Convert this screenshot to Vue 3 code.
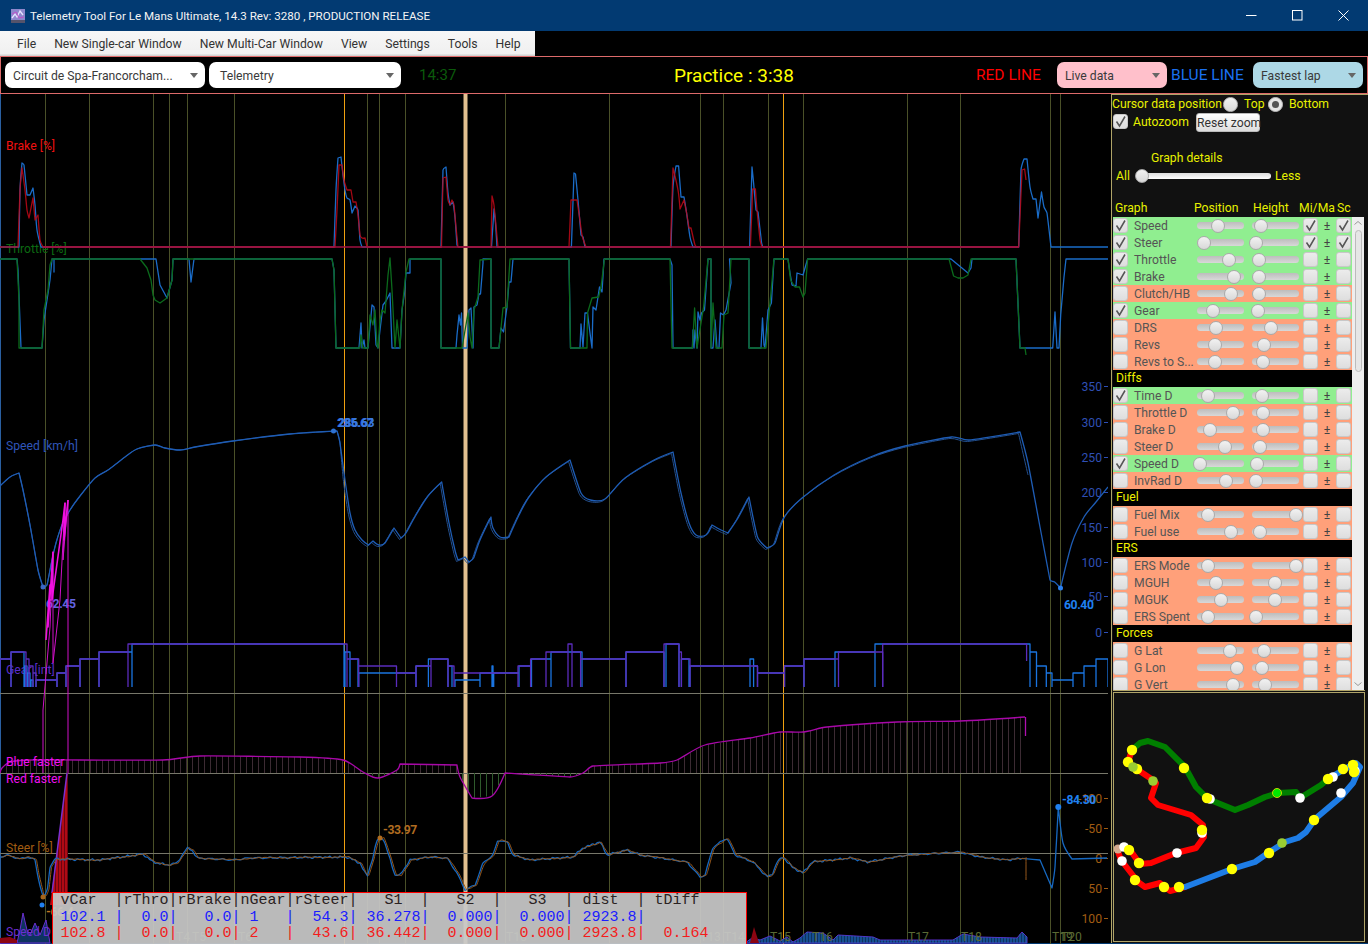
<script setup>
const menus = ['File', 'New Single-car Window', 'New Multi-Car Window', 'View', 'Settings', 'Tools', 'Help']

const graphs = [
  { name: 'Speed', on: true, pos: 1218, h: 1260.7, mm: true, sc: true },
  { name: 'Steer', on: true, pos: 1204, h: 1256, mm: true, sc: true },
  { name: 'Throttle', on: true, pos: 1228.7, h: 1258.7 },
  { name: 'Brake', on: true, pos: 1234, h: 1258.7 },
  { name: 'Clutch/HB', pos: 1230.7, h: 1258.7 },
  { name: 'Gear', on: true, pos: 1212.7, h: 1258 },
  { name: 'DRS', pos: 1216, h: 1271 },
  { name: 'Revs', pos: 1214.7, h: 1263.7 },
  { name: 'Revs to S...', pos: 1214.7, h: 1263 },
  { title: 'Diffs' },
  { name: 'Time D', on: true, pos: 1208, h: 1262 },
  { name: 'Throttle D', pos: 1233, h: 1263 },
  { name: 'Brake D', pos: 1209.7, h: 1263 },
  { name: 'Steer D', pos: 1224.7, h: 1260 },
  { name: 'Speed D', on: true, pos: 1199.7, h: 1257 },
  { name: 'InvRad D', pos: 1226, h: 1255.7 },
  { title: 'Fuel' },
  { name: 'Fuel Mix', pos: 1208, h: 1296.3 },
  { name: 'Fuel use', pos: 1230.7, h: 1260 },
  { title: 'ERS' },
  { name: 'ERS Mode', pos: 1208, h: 1296.3 },
  { name: 'MGUH', pos: 1216, h: 1275 },
  { name: 'MGUK', pos: 1220.7, h: 1275 },
  { name: 'ERS Spent', pos: 1208, h: 1255.7 },
  { title: 'Forces' },
  { name: 'G Lat', pos: 1230, h: 1264 },
  { name: 'G Lon', pos: 1237, h: 1262 },
  { name: 'G Vert', pos: 1233, h: 1264.7 },
]

const turnLines = [45, 89, 153, 169, 187, 234, 367, 379, 405, 505, 609, 700, 723, 768, 803, 907, 960, 1050, 1060]
const grid = [693, 773, 853]

const line = pts => pts.map(p => p.join(',')).join(' ')
const shift = (pts, from, to, dx, dy) => pts.map(([x, y]) => (x > from && x < to ? [x + dx, y + dy] : [x, y]))
const dist = (a, b) => Math.hypot(b[0] - a[0], b[1] - a[1])
const unit = (a, b) => {
  const n = dist(a, b) || 1
  return [(b[0] - a[0]) / n, (b[1] - a[1]) / n]
}

// rounds a trace but leaves real corners (brake onset, speed peaks) sharp
const smooth = pts => {
  const tangent = (prev, p, next, len) => {
    const u = unit(prev, p)
    const v = unit(p, next)
    if (prev === p || next === p || u[0] * v[0] + u[1] * v[1] < 0.5) return [0, 0]
    const t = unit(prev, next)
    return [t[0] * len, t[1] * len]
  }
  let d = `M${pts[0][0]},${pts[0][1]}`
  for (let i = 0; i < pts.length - 1; i++) {
    const p0 = pts[i - 1] || pts[i]
    const p1 = pts[i]
    const p2 = pts[i + 1]
    const p3 = pts[i + 2] || p2
    const seg = dist(p1, p2)
    const h1 = tangent(p0, p1, p2, Math.min(seg, dist(p0, p1) || seg) / 3)
    const h2 = tangent(p1, p2, p3, Math.min(seg, dist(p2, p3) || seg) / 3)
    d += `C${p1[0] + h1[0]},${p1[1] + h1[1]} ${p2[0] - h2[0]},${p2[1] - h2[1]} ${p2[0]},${p2[1]}`
  }
  return d
}

const brakeBlue = [
  [0, 247], [19, 247], [20, 190], [22, 163], [24, 165], [27, 195], [30, 195], [33, 188], [35, 205], [37, 230], [41, 247],
  [334, 247], [336, 190], [338, 158], [341, 157], [343, 175], [345, 190], [347, 198], [350, 200], [352, 213], [355, 206], [358, 210], [360, 240], [362, 247],
  [441, 247], [443, 170], [446, 167], [448, 193], [450, 205], [453, 202], [455, 217], [457, 245], [459, 247],
  [491.5, 247], [494, 209], [495.5, 223], [497, 247],
  [571.4, 247], [574, 173], [575.5, 174], [578, 200], [581, 235], [583, 237], [585, 247],
  [671, 247], [673, 187], [676, 166], [678.6, 166], [681, 197], [684, 197], [686.6, 213], [690, 237], [693, 247],
  [749.6, 247], [752, 167], [753.6, 183], [756, 210], [758, 212], [761.6, 243], [764, 247],
  [1018.7, 247], [1021, 170], [1024, 159], [1027, 159], [1030, 187], [1033, 199], [1036, 199], [1038, 218], [1041.5, 192], [1044, 207], [1047, 213], [1051, 247], [1108, 247],
]
const brakeRed = [
  [0, 247], [18, 247], [20, 190], [22, 168], [25, 190], [27, 210], [29, 218], [31, 208], [33, 198], [35, 220], [38, 215], [40, 240], [43, 247],
  [335, 247], [337, 210], [339, 165], [342, 165], [344, 180], [347, 190], [351, 190], [353, 202], [356, 202], [358, 215], [360, 235], [362, 238], [365, 238], [367, 247],
  [441.5, 247], [443, 178], [446, 177], [448, 200], [450, 205], [452, 200], [454, 205], [456, 227], [458, 247],
  [491, 247], [492, 196], [494, 205], [498, 247],
  [569, 247], [571, 200], [577, 200], [579.5, 217], [582, 235], [586, 247],
  [670.5, 247], [673, 168], [678, 190], [680, 209], [684, 200], [686.6, 213], [689, 228], [691, 228], [695, 245], [698, 247],
  [750.4, 247], [752.7, 189], [755.4, 189], [757, 210], [760, 240], [762, 247],
  [1018.7, 247], [1022, 170], [1024.6, 169], [1026, 180],
]
const brakeFlat = [[43, 247], [1019, 247]]
const throttleBlue = [
  [0, 259], [17, 259], [18, 270], [21, 348], [42, 348], [44, 320], [47, 300], [50, 280], [52, 259], [54, 259], [54, 272], [54, 259],
  [156, 259], [160, 285], [167, 298], [172, 280], [173, 259], [189, 259], [191, 282], [194, 259], [332, 259], [334, 270], [336, 348],
  [359, 348], [361, 323], [362, 348], [364, 340], [365, 348], [368, 348], [372, 305], [374, 307], [376, 345], [378, 348], [380, 330], [383, 305], [386, 301], [390, 293], [392, 348],
  [400, 348], [402, 310], [404.5, 293], [406, 273], [410, 273], [410, 259], [441, 259], [441, 348], [456, 348], [457, 335], [459, 315], [460.5, 325], [461.5, 313], [462.5, 348], [467, 348],
  [469, 310], [471, 308], [473, 348], [474, 307], [477, 305], [479, 294], [480.5, 294], [483, 263], [483, 259], [491, 259], [491, 348], [499, 348], [501, 328], [503.5, 332], [507, 307], [509, 282], [511, 282], [513, 259],
  [569, 259], [570.5, 348], [580, 348], [581, 324], [583, 347], [585, 313], [587.5, 313], [590, 333], [592, 348], [593, 307], [596, 310], [599.5, 287], [602, 292], [604, 259],
  [670, 259], [672, 265], [673, 348], [692.4, 348], [693, 330], [694, 348], [695, 330], [697, 348], [698, 312], [700, 320], [701.5, 313], [704.5, 310], [708, 259], [711, 259], [711, 348], [713, 348], [715, 320], [717, 348], [719, 348], [720.5, 313], [723.5, 315], [726, 310], [731, 283], [729.5, 259],
  [749, 259], [749, 348], [761, 348], [762.5, 318], [764, 345], [765, 348], [768, 310], [771.4, 303], [774, 259], [788, 259], [790, 273], [792, 285], [796, 286], [797, 273], [803, 275], [807.6, 259],
  [951, 259], [968, 273], [971, 268], [972, 259], [1016, 259], [1020, 348], [1052.7, 348], [1055, 312], [1057, 348], [1059, 348], [1060.7, 315], [1064, 277], [1066, 259], [1108, 259],
]
const throttleGreen = [
  [0, 259], [17, 259], [19, 300], [19, 348], [42, 348], [44, 310], [48, 290], [50, 265], [52, 259], [140, 259], [147, 268], [151, 280], [153, 295], [155, 300], [160, 303], [167, 298], [172, 280], [173, 259],
  [332, 259], [334, 270], [336, 348], [360, 348], [361, 335], [363, 348], [368, 348], [370, 315], [373, 325], [375, 310], [377, 345], [378, 348], [380, 320], [382, 310], [385, 313], [388, 275], [390, 258], [392, 290], [395, 348], [397, 320], [400, 348],
  [402, 310], [406, 272], [409, 259], [441, 259], [441, 348], [462, 348], [468, 313], [470, 337], [472, 348], [474, 310], [478, 297], [480, 260], [491, 259], [491, 348], [499, 348], [503, 308], [507, 307], [510, 259],
  [569, 259], [570.5, 348], [587, 348], [587.5, 313], [592, 298], [598.6, 297], [601, 287], [604.5, 259], [670, 259], [672, 348], [692.4, 348], [694.6, 308], [697, 348], [703.6, 307], [708, 259], [711, 259], [711, 348], [713, 303], [716, 348], [722, 348], [724, 315], [728, 313], [731, 259],
  [749, 259], [749, 348], [766, 348], [770, 303], [774, 259], [788, 259], [790.6, 280], [795, 287], [799.5, 287], [803, 297], [805, 293], [807.6, 259], [949, 259], [953.6, 276], [958, 278], [963, 278], [968, 275], [971, 259], [1016, 259], [1020, 348], [1025, 348], [1026, 355],
]
const speed = [
  [0, 486], [10, 477], [19, 473], [23, 490], [30, 525], [38, 570], [43, 587], [47, 585], [52, 560], [56, 543], [62, 525], [70, 510], [80, 496], [95, 478], [108, 470], [125, 457], [137, 449], [155, 445], [165, 448], [180, 450], [195, 447], [233, 441], [290, 434], [337, 431],
  [340, 443], [345, 480], [350, 513], [355, 530], [362, 540], [368.5, 545], [373, 541], [379, 545], [385, 543], [394, 528], [401, 538], [406, 533], [416, 515], [428, 496], [441.7, 482], [449, 523], [455.4, 552], [458, 560], [465, 557], [469, 562], [473.6, 558], [480, 540], [491, 517], [493, 528], [500, 537], [509, 537], [519, 515], [529, 497], [546, 477], [570, 460], [581, 493], [590.5, 500], [605, 499], [625, 478], [654, 460], [673, 452], [681, 493], [689, 523], [696, 535], [706, 535], [712, 525], [721, 530], [728, 533], [738, 518], [749, 497], [757.5, 537], [767, 548], [775, 543], [784.5, 517], [802, 498], [834, 475], [870.4, 457], [905, 446], [951.5, 437], [969, 440], [1020, 432], [1028, 463], [1040, 527], [1050, 580], [1054.6, 582], [1060.5, 588], [1072, 543], [1084, 517], [1096, 502], [1108, 487],
]
const speedOther = shift(speed, 340, 1022, -1.5, 1.5).filter(p => p[0] < 1027).concat([[1028, 475]])

// gear: [from, to, y], every change drops to neutral at the bottom of the plot
const gearPath = segs => segs.map(([a, b, y]) => `M${a},687V${y}H${b}V687`).join(' ')
const gearPurple = [
  [0, 11, 659], [11, 26, 652], [26, 29, 659], [29, 33, 666], [33, 36, 673], [36, 57, 680], [57, 66, 673], [66, 80, 666], [80, 99, 659], [99, 128, 652], [128, 347, 644],
  [347, 358.7, 659], [358.7, 396.5, 666], [396.5, 416, 673], [416, 431, 666], [431, 448, 659], [448, 454, 666], [454, 518, 673], [518, 530.6, 666], [530.6, 546, 659], [546, 568, 652], [568, 572, 644], [572, 580.6, 652], [580.6, 626, 659], [626, 664, 652], [664, 679, 644], [679, 681.4, 652], [681.4, 690, 659], [690, 757.5, 666], [757.5, 784.5, 673], [784.5, 804, 666], [804, 838.5, 659], [838.5, 882.7, 652],
]
const gearBlue = [
  [0, 11, 659], [11, 24, 652], [25, 27, 666], [28, 30, 673], [31, 33, 680], [36, 57, 680], [57, 66, 673], [66, 80, 666], [80, 99, 659], [99, 132, 652], [132, 344, 644],
  [345, 350, 652], [350, 358, 659], [358.7, 416, 673], [416, 428.4, 666], [428.4, 448, 659], [448, 452, 666], [455, 480, 680], [480, 492, 673], [492, 493, 666], [493.7, 519, 673], [519, 531.5, 666], [531.5, 551, 659], [551, 582, 652], [582, 626, 659], [626, 664, 652], [666, 679, 644], [681.4, 689, 659], [690, 750, 666], [750, 753.6, 659], [753.6, 757.5, 666], [757.5, 784.5, 673], [784.5, 804, 666], [804, 835, 659], [835, 875, 652], [875, 1030, 644], [1030, 1036.5, 652], [1036.5, 1046.3, 666], [1046.3, 1052, 673], [1052, 1073, 680], [1073, 1084, 673], [1084, 1096, 666], [1096, 1108, 659],
]

const diff = [
  [0, 773], [2, 768], [10, 762], [30, 760], [80, 760], [163, 760], [200, 756], [300, 757], [343, 760], [363, 772], [378, 778], [397, 770], [400, 764], [457, 765], [460, 777], [472, 798], [492, 796], [505, 773], [570, 777], [583, 773], [593, 766], [660, 763], [677, 760], [705, 745], [750, 738], [780, 732], [803, 732], [827, 727], [897, 722], [960, 721], [1025, 717],
]
const yAt = (pts, x) => {
  for (let i = 1; i < pts.length; i++)
    if (x <= pts[i][0]) {
      const [a, b] = [pts[i - 1], pts[i]]
      return a[1] + (b[1] - a[1]) * (x - a[0]) / (b[0] - a[0] || 1)
    }
  return pts[pts.length - 1][1]
}
const hatch = []
for (let x = 6; x < 1026; x += 6) {
  const y = yAt(diff, x)
  hatch.push({ x, y, low: y > 773 })
}
const redHatch = []
for (let x = 52; x < 68; x += 3) redHatch.push({ x, y: 905 - (x - 50) * 132 / 17 })

const steerBase = [
  [0, 857], [7, 855], [20, 859], [27, 857], [35, 860], [38, 877], [43, 897], [47, 893], [50, 867], [55, 859], [100, 860], [143, 854], [153, 862], [167, 865], [177, 863], [187, 848], [192, 850], [197, 858], [233, 860], [250, 858], [347, 857], [360, 863], [367, 877], [373, 857], [377, 840], [383, 838], [388, 853], [395, 875], [400, 875], [410, 860], [430, 857], [447, 858], [457, 873], [465, 890], [475, 885], [483, 863], [493, 855], [498, 840], [507, 842], [513, 855], [530, 860], [573, 857], [583, 848], [600, 842], [607, 855], [627, 850], [640, 855], [687, 862], [700, 877], [705, 875], [713, 847], [727, 838], [735, 855], [753, 862], [767, 877], [772, 875], [777, 862], [783, 857], [792, 867], [803, 873], [812, 862], [850, 858], [867, 862], [907, 855], [960, 852], [980, 857], [1007, 860], [1025, 858],
]
const wobble = (pts, amp, k, dx) => {
  const out = []
  for (let x = 0; x <= pts[pts.length - 1][0]; x += 2.5)
    out.push([x + dx, yAt(pts, x) + amp * Math.sin(x * k) * Math.cos(x * 0.37)])
  return out
}
const steerBlue = wobble(steerBase, 1.2, 0.9, 0).concat([[1040, 860], [1052, 888], [1055, 867], [1058.3, 807], [1063, 843], [1072, 859], [1107, 858]])
const steerBrown = wobble(steerBase, 0.7, 0.53, 1.5).concat([[1026, 858], [1026, 880]])

const speedAxis = [[350, 386], [300, 422], [250, 457], [200, 492], [150, 527], [100, 562], [50, 596], [0, 632]]
const steerAxis = [['-100', 798], ['-50', 828], ['0', 858], ['50', 888], ['100', 918]]
const turnLabels = [['T4', 176], ['T5', 192], ['T6', 238], ['T10', 506], ['T13', 700], ['T14', 724], ['T15', 770], ['T16', 812], ['T17', 908], ['T18', 961], ['T19', 1052], ['T20', 1061]]

const deltaArea = [[745, 943], [752, 938], [760, 940], [770, 936], [780, 941], [787, 937], [793, 942], [800, 938], [807, 932], [823, 933], [833, 940], [838, 935], [873, 937], [880, 940], [953, 940], [963, 934], [980, 937], [1017, 938], [1022, 932], [1027, 937], [1027, 943]]
const deltaLeft = [[0, 943], [17, 943], [20, 930], [23, 913], [27, 930], [30, 935], [35, 923], [40, 935], [46, 920], [50, 943]]
const deltaHatch = []
for (let x = 750; x < 1027; x += 3) deltaHatch.push({ x, y: yAt(deltaArea, x) })

const tablePre = [
  'vCar  |rThro|rBrake|nGear|rSteer|   S1  |   S2  |   S3  | dist  | tDiff',
  '102.1 |  0.0|   0.0| 1   |  54.3| 36.278|  0.000|  0.000| 2923.8|',
  '102.8 |  0.0|   0.0| 2   |  43.6| 36.442|  0.000|  0.000| 2923.8|  0.164',
]

const mapGreen = [[1133, 749], [1140, 743], [1148, 741], [1165, 747], [1185, 767], [1196, 787], [1208, 799], [1235, 810], [1248, 805], [1265, 797], [1278, 793], [1296, 792], [1300, 798], [1321, 785], [1328, 779]]
const mapBlue = [[1328, 779], [1343, 770], [1356, 763], [1360, 767], [1353, 783], [1341, 797], [1315, 819], [1306, 832], [1298, 838], [1285, 842], [1268, 853], [1255, 862], [1232, 869], [1185, 887]]
const mapRed = [[1185, 887], [1170, 891], [1160, 883], [1145, 887], [1138, 882], [1121, 860], [1117, 849], [1125, 847], [1130, 850], [1140, 864], [1151, 863], [1176, 853], [1196, 848], [1204, 837], [1203, 825], [1191, 815], [1158, 805], [1151, 798], [1156, 783], [1153, 780], [1138, 770], [1128, 762], [1132, 750]]
const dotsWhite = [[1210, 799], [1300, 798], [1333, 777], [1355, 771], [1341, 793], [1202, 833], [1177, 853], [1122, 861], [1124, 847]]
const dotsYellow = [[1132, 750], [1128, 762], [1137, 769], [1184, 768], [1207, 798], [1328, 779], [1343, 769], [1353, 765], [1354, 772], [1314, 820], [1269, 853], [1232, 869], [1179, 887], [1164, 887], [1135, 880], [1139, 863], [1129, 850], [1202, 830]]
const dotsOlive = [[1153, 781], [1133, 767], [1282, 843]]
</script>

<template>
  <div class="win">
    <div class="titlebar">
      <svg class="appicon" width="14" height="14" viewBox="0 0 14 14">
        <rect width="14" height="14" fill="#8e86cc" />
        <rect y="11" width="14" height="3" fill="#55536a" />
        <path d="M1 9 4 5 6 8 9 2 12 6" fill="none" stroke="#e6e2ff" stroke-width="1.3" />
        <path d="M1 5 5 3 8 9 13 8" fill="none" stroke="#c050c8" stroke-width="1" />
      </svg>
      <span class="wintitle">Telemetry Tool For Le Mans Ultimate, 14.3 Rev: 3280 , PRODUCTION RELEASE</span>
      <div class="winbtns">
        <svg width="11" height="11" viewBox="0 0 11 11"><path d="M0 5.5H10.500" stroke="#fff" /></svg>
        <svg width="11" height="11" viewBox="0 0 11 11"><rect x=".5" y=".5" width="9.500" height="9.500" fill="none" stroke="#fff" /></svg>
        <svg width="11" height="11" viewBox="0 0 11 11"><path d="M.5.5 10.500 10.500M10.500.5.5 10.500" stroke="#fff" /></svg>
      </div>
    </div>

    <div class="menubar">
      <span v-for="m in menus" :key="m" class="menuitem">{{ m }}</span>
    </div>

    <div class="toolbar">
      <div class="combo white track-combo"><span>Circuit de Spa-Francorcham...</span><i class="arrow" /></div>
      <div class="combo white kind-combo"><span>Telemetry</span><i class="arrow" /></div>
      <span class="clock">14:37</span>
      <span class="session">Practice : 3:38</span>
      <span class="redline">RED LINE</span>
      <div class="combo pink"><span>Live data</span><i class="arrow" /></div>
      <span class="blueline">BLUE LINE</span>
      <div class="combo lblue"><span>Fastest lap</span><i class="arrow" /></div>
    </div>

    <div class="main">
      <svg class="plot" width="1108" height="850" viewBox="0 94 1108 850">
        <!-- turns and sector lines -->
        <line x1="0.500" y1="94" x2="0.500" y2="944" class="edge" />
        <line v-for="x in turnLines" :key="x" :x1="x + .5" y1="94" :x2="x + .5" y2="944" class="turn" />
        <line x1="344.500" y1="94" x2="344.500" y2="944" class="sector" />
        <line x1="783.500" y1="94" x2="783.500" y2="944" class="sector" />
        <rect x="463.500" y="94" width="4" height="850" class="cursor" />
        <line v-for="y in grid" :key="y" x1="0" :y1="y + .5" x2="1108" :y2="y + .5" class="hgrid" />

        <text x="6" y="150" class="lab" fill="#f01010">Brake [%]</text>
        <text x="6" y="253" class="lab" fill="#0c6a12">Throttle [%]</text>
        <text x="6" y="450" class="lab" fill="#2f55b8">Speed [km/h]</text>
        <text x="6" y="674" class="lab" fill="#5a2cc8">Gear [int]</text>

        <!-- pedals -->
        <path :d="smooth(brakeBlue)" class="tr" stroke="#1a6cc8" />
        <path :d="smooth(brakeRed)" class="tr" stroke="#c00818" stroke-opacity=".85" />
        <polyline :points="line(brakeFlat)" class="tr" stroke="#a01040" />
        <polyline :points="line(throttleBlue)" class="tr" stroke="#1a6cc8" />
        <polyline :points="line(throttleGreen)" class="tr" stroke="#0b6a1c" />

        <!-- speed -->
        <text v-for="[v, y] in speedAxis" :key="v" x="1102" :y="y + 5" class="axis" fill="#2f4fb4">{{ v }}</text>
        <line v-for="[v, y] in speedAxis" :key="'t' + v" x1="1104" :y1="y + .5" x2="1108" :y2="y + .5" stroke="#2f4fb4" />
        <path :d="smooth(speedOther)" class="tr thin" stroke="#24508f" />
        <path :d="smooth(speed)" class="tr" stroke="#1e5cb4" />
        <circle cx="43" cy="587" r="2.500" fill="#3c68c4" />
        <circle cx="333.500" cy="431" r="2.500" fill="#2e72d4" />
        <circle cx="1060.500" cy="588" r="2.500" fill="#2a80f0" />
        <text x="337" y="427" class="val" fill="#2f6fd8">285.67</text>
        <text x="338" y="427" class="val" fill="#3a78e0">286.63</text>
        <text x="46" y="608" class="val" fill="#6464e0">62.45</text>
        <text x="1064" y="609" class="val" fill="#1f80f0">60.40</text>

        <!-- gear -->
        <path :d="gearPath(gearBlue)" class="tr" stroke="#1a74e0" />
        <path :d="gearPath(gearPurple)" class="tr" stroke="#5a2cbc" />
        <path d="M882.700 687V644H1026.600V661" class="tr" stroke="#5a2cbc" />

        <!-- time difference -->
        <line v-for="h in hatch" :key="h.x" :x1="h.x + .5" :y1="h.y" :x2="h.x + .5" y2="773" :stroke="h.low ? '#2f5a2c' : '#3c2b33'" />
        <path :d="smooth(diff)" class="tr" stroke="#a808a8" />
        <path d="M1025.500 717V736" class="tr" stroke="#b010b0" />

        <!-- speed difference spikes at the start of the lap -->
        <polygon points="50,905 67,773 68,773 68,905" fill="#b00a14" />
        <line v-for="r in redHatch" :key="r.x" :x1="r.x + .5" :y1="r.y" :x2="r.x + .5" y2="905" stroke="#6a0410" />
        <line x1="52" y1="893" x2="67" y2="773" stroke="#7a30d0" stroke-width="1.500" />
        <polyline points="43,773 43,710 50,627 53,552 53,663 60,600 65,503 63,560 68,500 68,773" class="tr thin" stroke="#d010c8" />
        <polyline points="46,640 50,585 48,627 53,552 52,600 63,520 65,503 64,540 68,500" class="tr wide" stroke="#f010e0" />
        <text x="6" y="766" class="lab" fill="#f010f0">Blue faster</text>
        <text x="6" y="783" class="lab" fill="#f010f0">Red faster</text>

        <!-- steer -->
        <text x="6" y="852" class="lab" fill="#a05c12">Steer [%]</text>
        <text v-for="[v, y] in steerAxis" :key="v" x="1102" :y="y + 5" class="axis" fill="#a05c12">{{ v }}</text>
        <line v-for="[v, y] in steerAxis" :key="'s' + v" x1="1104" :y1="y + .5" x2="1108" :y2="y + .5" stroke="#a05c12" />
        <path :d="smooth(steerBlue)" class="tr" stroke="#1668c0" />
        <path :d="smooth(steerBrown)" class="tr thin" stroke="#96581c" />
        <circle cx="380" cy="838" r="2.500" fill="#b06c20" />
        <circle cx="43" cy="897" r="2.500" fill="#a86418" />
        <circle cx="42" cy="905" r="2.500" fill="#2080f0" />
        <circle cx="1058.300" cy="807" r="3" fill="#1f80f0" />
        <text x="383" y="834" class="val" fill="#b06c20">-33.97</text>
        <text x="1062" y="804" class="val" fill="#1f80f0">-84.30</text>
        <text x="46" y="916" class="val" fill="#c07820">-66.4</text>

        <!-- speed D strip -->
        <polygon :points="line(deltaLeft)" fill="#0e3360" stroke="#6a2ed0" />
        <polygon points="0,943 0,938 10,937 17,940 17,943" fill="#8c0512" />
        <polygon :points="line(deltaArea)" fill="#0e3360" stroke="#5a2cc8" />
        <line v-for="d in deltaHatch" :key="d.x" :x1="d.x" :y1="d.y" :x2="d.x" y2="943" stroke="#1f6cc0" />
        <polygon points="750,943 754,927 759,943" fill="#8c0512" />
        <text x="6" y="936" class="lab" fill="#6a2ed0">Speed D</text>
        <text v-for="[t, x] in turnLabels" :key="t" :x="x" y="941" class="turnlab">{{ t }}</text>
      </svg>

      <!-- the cursor readout floats over the graphs -->
      <pre class="readout"><span class="r0">{{ tablePre[0] }}</span>
<span class="r1">{{ tablePre[1] }}</span>
<span class="r2">{{ tablePre[2] }}</span></pre>

      <aside class="side">
        <div class="controls">
          <div class="cursorpos">
            <span class="r-label">Cursor data position</span>
            <i class="radio" />
            <span class="r-top">Top</span>
            <i class="radio sel"><b /></i>
            <span class="r-bot">Bottom</span>
          </div>
          <div class="zoomrow">
            <span class="chk on">
              <svg width="13" height="13" viewBox="0 0 13 13"><path d="M2.500 6.500 5.500 11 11 1.500" /></svg>
            </span>
            <span class="azlabel">Autozoom</span>
            <span class="resetbtn">Reset zoom</span>
          </div>
          <div class="details-title">Graph details</div>
          <div class="details">
            <span>All</span>
            <div class="details-track"><i class="thumb" style="left: 6px" /></div>
            <span>Less</span>
          </div>
          <div class="cols">
            <span class="c-graph">Graph</span>
            <span class="c-pos">Position</span>
            <span class="c-h">Height</span>
            <span class="c-mm">Mi/Ma</span>
            <span class="c-sc">Sc</span>
          </div>

          <div class="listwrap">
            <div class="list">
              <template v-for="g in graphs" :key="g.name || g.title">
                <div v-if="g.title" class="sect">{{ g.title }}</div>
                <div v-else class="row" :class="g.on ? 'green' : 'coral'">
                  <span class="chk">
                    <svg v-if="g.on" width="13" height="13" viewBox="0 0 13 13"><path d="M2.500 6.500 5.500 11 11 1.500" /></svg>
                  </span>
                  <span class="name">{{ g.name }}</span>
                  <div class="track"><i class="thumb" :style="{ left: g.pos - 1197 + 'px' }" /></div>
                  <div class="track t2"><i class="thumb" :style="{ left: g.h - 1252 + 'px' }" /></div>
                  <span class="chk c-m">
                    <svg v-if="g.mm" width="13" height="13" viewBox="0 0 13 13"><path d="M2.500 6.500 5.500 11 11 1.500" /></svg>
                  </span>
                  <span class="pm">±</span>
                  <span class="chk">
                    <svg v-if="g.sc" width="13" height="13" viewBox="0 0 13 13"><path d="M2.500 6.500 5.500 11 11 1.500" /></svg>
                  </span>
                </div>
              </template>
            </div>
            <div class="scroll">
              <svg width="12" height="10" viewBox="0 0 12 10"><path d="M2.500 6.500 6 3.500 9.500 6.500" fill="none" stroke="#999" /></svg>
              <div class="scrollthumb" />
              <svg class="sdown" width="12" height="10" viewBox="0 0 12 10"><path d="M2.500 3.500 6 6.500 9.500 3.500" fill="none" stroke="#999" /></svg>
            </div>
          </div>
        </div>

        <div class="mapbox">
          <svg width="250" height="248" viewBox="1114 693 250 248">
            <polyline :points="line(mapRed)" class="mt" stroke="#f00" />
            <polyline :points="line(mapGreen)" class="mt" stroke="#007f00" />
            <polyline :points="line(mapBlue)" class="mt" stroke="#1e7de6" />
            <circle cx="1118" cy="849" r="4.500" fill="#d2a98e" />
            <circle v-for="([x, y], i) in dotsWhite" :key="'w' + i" :cx="x" :cy="y" r="4.800" fill="#fff" />
            <circle v-for="([x, y], i) in dotsYellow" :key="'y' + i" :cx="x" :cy="y" r="5.200" fill="#ff0" />
            <circle v-for="([x, y], i) in dotsOlive" :key="'o' + i" :cx="x" :cy="y" r="4.800" fill="#9acd32" />
            <circle cx="1277" cy="793" r="4.500" fill="#00e800" stroke="#c8d000" />
          </svg>
        </div>
      </aside>
    </div>
  </div>
</template>

<style>
html, body {
  margin: 0;
  background: #000;
}
</style>

<style scoped>
.win {
  width: 1368px;
  height: 944px;
  overflow: hidden;
  display: flex;
  flex-direction: column;
  background: #000;
  font-family: Roboto, "Noto Sans", sans-serif;
  font-size: 12.200px;
  white-space: nowrap;
}

.titlebar {
  height: 31px;
  flex: none;
  display: flex;
  align-items: center;
  background: #023a72;
  color: #f4f4f4;
}
.wintitle {
  font-size: 11.600px;
}
.appicon {
  margin: 0 5px 0 11px;
  flex: none;
}
.winbtns {
  margin-left: auto;
  display: flex;
  gap: 35px;
  padding-right: 19px;
}

.menubar {
  height: 25px;
  width: 535px;
  flex: none;
  display: flex;
  align-items: center;
  padding-left: 8px;
  box-sizing: border-box;
  background: linear-gradient(#f7f7f7, #f0f0f0 90%, #ccc);
  color: #333;
}
.menuitem {
  padding: 0 9px;
}

.toolbar {
  height: 38px;
  flex: none;
  box-sizing: border-box;
  display: flex;
  align-items: center;
  border: 1px solid #dd6a6a;
  padding-left: 4px;
}
.combo {
  height: 26px;
  box-sizing: border-box;
  border-radius: 7px;
  display: flex;
  align-items: center;
  justify-content: space-between;
  padding: 1px 7px 0 8px;
  flex: none;
  color: #3a3a3a;
  width: 110px;
}
.combo.white { background: #fff; }
.combo.pink { background: #ffc0cb; }
.combo.lblue { background: #add8e6; }
.track-combo { width: 200px; }
.kind-combo { width: 192px; margin-left: 4px; padding-left: 11px; }
.arrow {
  width: 0;
  height: 0;
  border-left: 4px solid transparent;
  border-right: 4px solid transparent;
  border-top: 5px solid #666;
}
.clock,
.session,
.redline,
.blueline {
  flex: none;
}
.clock {
  color: #0b5a0b;
  font-size: 15px;
  margin-left: 18px;
  width: 255px;
}
.session {
  color: #ffff00;
  font-size: 19px;
  width: 302px;
}
.redline {
  color: #f00;
  font-size: 15.500px;
  width: 81px;
}
.blueline {
  color: #1a70f0;
  font-size: 15.500px;
  margin-left: 4px;
  width: 82px;
}

.main {
  position: relative;
  flex: 1;
  display: flex;
  min-height: 0;
  border-bottom: 1px solid #023a72;
}
.plot {
  flex: none;
  display: block;
  margin-right: 3px;
}
.edge { stroke: #2a5fa0; }
.turn { stroke: #4a5028; }
.sector { stroke: #f0a010; }
.cursor { fill: #e2c090; }
.hgrid { stroke: #77776a; }
.lab { font-size: 12.200px; }
.axis { font-size: 12.200px; text-anchor: end; }
.val { font-size: 12.200px; font-weight: 700; letter-spacing: -.4px; }
.turnlab { font-size: 12.200px; fill: #5a6a34; }
.tr { fill: none; stroke-width: 1.300; stroke-linejoin: round; }
.tr.thin { stroke-width: 1; }
.tr.wide { stroke-width: 1.600; }

.readout {
  position: absolute;
  left: 52px;
  top: 798px;
  width: 695px;
  height: 52px;
  box-sizing: border-box;
  margin: 0;
  padding: 0 0 0 7.500px;
  background: rgba(200, 200, 200, .93);
  border: 1px solid #f00;
  border-bottom: 0;
  font-family: "Liberation Mono", monospace;
  font-size: 15px;
  line-height: 16.500px;
}
.r0 { color: #2a2222; }
.r1 { color: #1c1cff; }
.r2 { color: #f41c1c; }

.side {
  width: 257px;
  flex: none;
  box-sizing: border-box;
  border-left: 1px solid #b0a468;
  border-top: 1px solid #b0a468;
  background: #111;
  color: #e8f000;
  display: flex;
  flex-direction: column;
}
.controls {
  height: 596px;
  flex: none;
  overflow: hidden;
}
.cursorpos {
  height: 18px;
  display: flex;
  align-items: center;
}
.r-label {
  width: 108px;
  flex: none;
}
.radio {
  width: 15px;
  height: 15px;
  flex: none;
  box-sizing: border-box;
  border-radius: 50%;
  border: 1px solid #bbb;
  background: linear-gradient(#f0f0f0, #d8d8d8);
  margin-left: 3px;
  display: flex;
  align-items: center;
  justify-content: center;
}
.radio.sel {
  margin-left: 0;
  background: #e6e6e6;
}
.radio b {
  width: 7px;
  height: 7px;
  border-radius: 50%;
  background: #555;
}
.r-top { margin-left: 6px; width: 24px; flex: none; }
.r-bot { margin-left: 6px; }
.zoomrow {
  height: 17px;
  margin-top: 0;
  display: flex;
  align-items: center;
  padding-left: 1px;
}
.azlabel {
  margin-left: 5px;
  width: 55px;
  flex: none;
}
.resetbtn {
  margin-left: 8px;
  margin-top: 2px;
  height: 19px;
  width: 64px;
  flex: none;
  box-sizing: border-box;
  text-align: center;
  line-height: 18px;
  color: #333;
  background: linear-gradient(#fff, #ddd);
  border: 1px solid #bbb;
  border-radius: 3px;
}
.details-title {
  margin: 20px 0 0 39px;
  height: 17px;
  line-height: 17px;
}
.details {
  display: flex;
  align-items: center;
  height: 17px;
  padding-left: 4px;
}
.details-track {
  position: relative;
  width: 135px;
  height: 6px;
  margin: 0 4px 0 6px;
  border-radius: 3px;
  background: linear-gradient(#ddd, #fff);
}
.cols {
  position: relative;
  margin-top: 16px;
  height: 17px;
  line-height: 17px;
}
.cols span {
  position: absolute;
  top: 0;
}
.c-graph { left: 3px; }
.c-pos { left: 82px; }
.c-h { left: 141px; }
.c-mm { left: 187px; }
.c-sc { left: 225px; }

.listwrap {
  display: flex;
  height: 473px;
  margin-left: 1px;
}
.list {
  width: 239px;
  flex: none;
  overflow: hidden;
}
.row {
  height: 17px;
  display: flex;
  align-items: center;
  color: #555;
}
.row.green { background: #90ee90; }
.row.coral { background: #ffa07a; }
.sect {
  height: 17px;
  line-height: 17px;
  background: #000;
  color: #f0f000;
  padding-left: 3px;
}
.chk {
  width: 15px;
  height: 15px;
  flex: none;
  box-sizing: border-box;
  border: 1px solid #c8c8c8;
  border-radius: 3px;
  background: linear-gradient(#ececec, #dedede);
  display: flex;
  align-items: center;
  justify-content: center;
}
.chk path {
  fill: none;
  stroke: #555;
  stroke-width: 1.500;
}
.name {
  width: 63px;
  flex: none;
  padding-left: 6px;
  overflow: hidden;
}
.track {
  position: relative;
  width: 47px;
  height: 7px;
  flex: none;
  border-radius: 4px;
  background: linear-gradient(#bdbdbd, #d8d8d8);
}
.t2 {
  margin-left: 8px;
}
.c-m {
  margin-left: 4px;
}
.pm {
  width: 18px;
  flex: none;
  text-align: center;
  color: #444;
}
.thumb {
  position: absolute;
  top: 50%;
  width: 14px;
  height: 14px;
  margin: -7px 0 0 -7px;
  box-sizing: border-box;
  border-radius: 50%;
  border: 1px solid #aaa;
  background: linear-gradient(#f2f2f2, #d8d8d8);
}
.scroll {
  width: 12px;
  flex: none;
  background: #eee;
  display: flex;
  flex-direction: column;
  align-items: center;
  padding-top: 1px;
  box-sizing: border-box;
}
.scrollthumb {
  width: 7px;
  height: 142px;
  margin-top: 2px;
  box-sizing: border-box;
  background: #e6e6e6;
  border: 1px solid #bbb;
  border-radius: 4px;
}
.sdown {
  margin-top: auto;
  margin-bottom: 1px;
}

.mapbox {
  flex: none;
  box-sizing: border-box;
  width: 252px;
  height: 250px;
  margin: 1px 0 0 1px;
  border: 1px solid #b0a468;
  box-shadow: 0 -1px 0 0 #111, 0 -2px 0 0 #b0a468;
}
.mapbox svg {
  display: block;
}
.mt {
  fill: none;
  stroke-width: 6;
  stroke-linejoin: round;
  stroke-linecap: round;
}
</style>
